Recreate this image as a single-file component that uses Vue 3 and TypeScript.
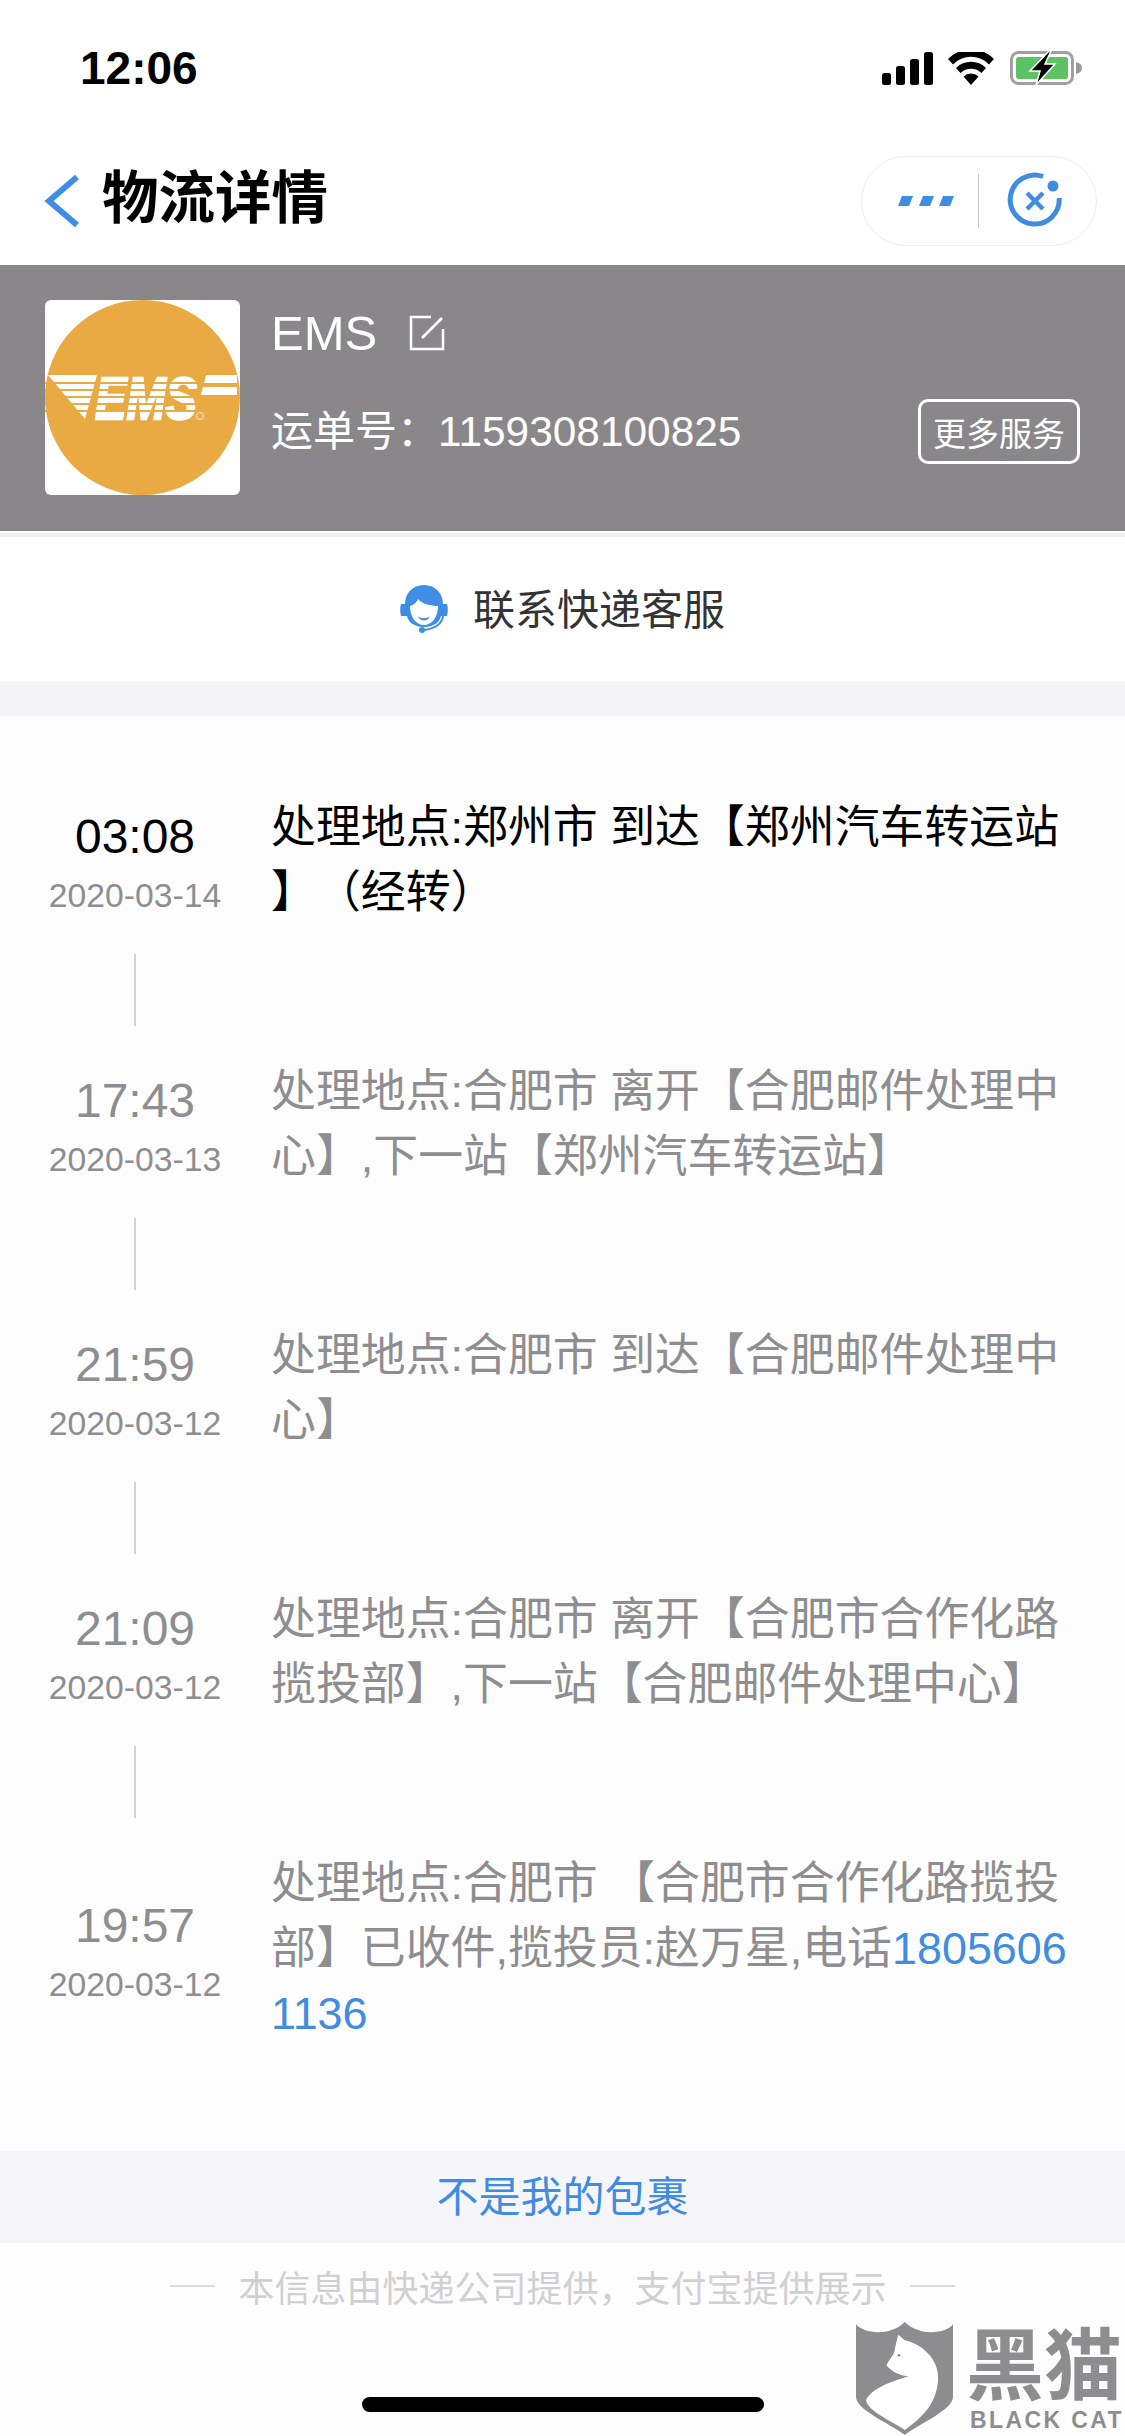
<script setup lang="ts">
interface Part { text: string; link?: boolean }
interface Step { time: string; date: string; active?: boolean; lines: Part[][] }

const steps: Step[] = [
  { time: '03:08', date: '2020-03-14', active: true, lines: [
    [{ text: '处理地点:郑州市 到达【郑州汽车转运站' }],
    [{ text: '】（经转）' }],
  ] },
  { time: '17:43', date: '2020-03-13', lines: [
    [{ text: '处理地点:合肥市 离开【合肥邮件处理中' }],
    [{ text: '心】,下一站【郑州汽车转运站】' }],
  ] },
  { time: '21:59', date: '2020-03-12', lines: [
    [{ text: '处理地点:合肥市 到达【合肥邮件处理中' }],
    [{ text: '心】' }],
  ] },
  { time: '21:09', date: '2020-03-12', lines: [
    [{ text: '处理地点:合肥市 离开【合肥市合作化路' }],
    [{ text: '揽投部】,下一站【合肥邮件处理中心】' }],
  ] },
  { time: '19:57', date: '2020-03-12', lines: [
    [{ text: '处理地点:合肥市 【合肥市合作化路揽投' }],
    [{ text: '部】已收件,揽投员:赵万星,电话' }, { text: '1805606', link: true }],
    [{ text: '1136', link: true }],
  ] },
]
const stripeY: number[] = [82, 89, 96, 103, 110]
</script>

<template>
  <div class="page">
    <div class="status">
      <span class="clock">12:06</span>
      <div class="status-icons">
        <svg width="51" height="33" viewBox="0 0 51 33">
          <rect x="0" y="21" width="9" height="12" rx="2.5" />
          <rect x="14" y="14" width="9" height="19" rx="2.5" />
          <rect x="28" y="7" width="9" height="26" rx="2.5" />
          <rect x="42" y="0" width="9" height="33" rx="2.5" />
        </svg>
        <svg class="wifi" width="46" height="33" viewBox="0 0 46 33">
          <path d="M23 33 L15.5 24.5 A11 11 0 0 1 30.5 24.5 Z" />
          <path d="M12.5 21 L8 16 A21 21 0 0 1 38 16 L33.5 21 A15 15 0 0 0 12.5 21 Z" />
          <path d="M5 12.5 L0 7 A32 32 0 0 1 46 7 L41 12.5 A25 25 0 0 0 5 12.5 Z" />
        </svg>
        <svg class="battery" width="72" height="34" viewBox="0 0 72 34">
          <rect x="1.5" y="1.5" width="61" height="31" rx="7" fill="none" stroke="#a0a0a0" stroke-width="3" />
          <rect x="6" y="6" width="52" height="22" rx="2.5" fill="#5cc264" />
          <path d="M66 11 C70 12 72 14 72 17 C72 20 70 22 66 23 Z" fill="#9a9a9a" />
          <path d="M39 0 L20 20 H30 L26 34 L45 13 H35 L41 0 Z" fill="#000" stroke="#fff" stroke-width="1.5" />
        </svg>
      </div>
    </div>

    <div class="nav">
      <svg class="back" width="36" height="52" viewBox="0 0 36 52">
        <path d="M33 2 L5 26 L33 50" fill="none" stroke="#3f8ee6" stroke-width="6" />
      </svg>
      <h1 class="title">物流详情</h1>
      <div class="capsule">
        <div class="capsule-more">
          <svg width="56" height="10" viewBox="0 0 56 10">
            <path d="M4 0 H15 L11 10 H0 Z M25 0 H36 L32 10 H21 Z M45 0 H56 L52 10 H41 Z" fill="#3f8ce0" />
          </svg>
        </div>
        <div class="capsule-close">
          <svg width="58" height="58" viewBox="0 0 58 58">
            <path d="M37 4.5 A24.5 24.5 0 1 0 53.2 26" fill="none" stroke="#3f8ce0" stroke-width="5" />
            <circle cx="47" cy="14" r="5.5" fill="#3f8ce0" />
            <path d="M21 21 L37 37 M37 21 L21 37" stroke="#3f8ce0" stroke-width="4.5" />
          </svg>
        </div>
      </div>
    </div>

    <div class="carrier">
      <div class="logo">
        <svg width="195" height="195" viewBox="0 0 195 195">
          <circle cx="97.5" cy="97.5" r="97.5" fill="#e9a943" />
          <path d="M3 75 H52 L40 119 Z" fill="#fff" />
          <path d="M161 75 H192 V83 H159 Z M158 87 H192 V95 H156 Z" fill="#fff" />
          <text x="50" y="119" class="ems-mark" textLength="102" lengthAdjust="spacingAndGlyphs">EMS</text>
          <rect v-for="y in stripeY" :key="y" x="0" :y="y" width="155" height="2" fill="#e9a943" />
          <circle cx="155" cy="116" r="3.5" fill="none" stroke="#fff" stroke-width="1" opacity="0.7" />
        </svg>
      </div>
      <div class="carrier-info">
        <div class="carrier-name">
          <span>EMS</span>
          <svg class="edit" width="36" height="36" viewBox="0 0 36 36">
            <path d="M22 2 H2 V34 H34 V14" fill="none" stroke="#fff" stroke-width="2.5" />
            <path d="M13 23 L33 3" fill="none" stroke="#fff" stroke-width="2.5" />
          </svg>
        </div>
        <div class="carrier-row">
          <div class="waybill"><span class="waybill-label">运单号：</span><span class="waybill-no">1159308100825</span></div>
          <div class="more-btn">更多服务</div>
        </div>
      </div>
    </div>
    <div class="carrier-edge"></div>

    <div class="contact">
      <svg width="48" height="48" viewBox="0 0 48 48">
        <path d="M24 0 C36 0 43 9 43 19 H47 C48 21 48 28 47 31 H41 C40 36 35 42 24 42 C13 42 8 36 7 31 H1 C0 28 0 21 1 19 H5 C5 9 12 0 24 0 Z" fill="#3f8ee6" />
        <path d="M10 20 C10 11 17 6 24 6 C31 6 38 11 38 20 C33 21 22 19 18 13 C17 17 14 20 10 20 Z" fill="#3f8ee6" />
        <path d="M10 21 C14 20 17 17 18 14 C22 19 32 21 38 21 C38 32 32 40 24 40 C16 40 10 32 10 21 Z" fill="#fff" />
        <path d="M18 31 C21 34 27 34 30 31 C28 37 20 37 18 31 Z" fill="#3f8ee6" />
        <path d="M43 30 C43 39 34 44 24 45" fill="none" stroke="#3f8ee6" stroke-width="2" />
        <circle cx="22" cy="45" r="3" fill="#3f8ee6" />
      </svg>
      <span class="contact-label">联系快递客服</span>
    </div>
    <div class="divider"></div>

    <div class="timeline">
      <template v-for="(step, i) in steps" :key="i">
        <div v-if="i > 0" class="connector"></div>
        <div class="step" :class="{ active: step.active }">
          <div class="when">
            <div class="time">{{ step.time }}</div>
            <div class="date">{{ step.date }}</div>
          </div>
          <div class="detail">
            <div v-for="(line, l) in step.lines" :key="l" class="line">
              <span v-for="(part, p) in line" :key="p" :class="{ link: part.link }">{{ part.text }}</span>
            </div>
          </div>
        </div>
      </template>
    </div>

    <div class="not-mine">不是我的包裹</div>
    <div class="note">
      <i class="dash"></i>
      <span>本信息由快递公司提供，支付宝提供展示</span>
      <i class="dash"></i>
    </div>

    <div class="home-bar"></div>

    <div class="watermark">
      <svg width="97" height="113" viewBox="48 65 292 340">
        <path d="M48 72 C70 100 150 110 195 65 C240 110 320 100 340 72 L340 290 C340 330 240 370 195 405 C150 370 48 330 48 290 Z" fill="#8d8d90" />
        <path d="M175 103 L195 120 C260 135 300 190 295 240 C290 310 250 350 195 390 C150 360 85 335 78 300 C95 265 150 245 207 228 C185 228 155 215 140 195 C148 175 165 165 165 145 Z" fill="#fff" />
        <circle cx="177" cy="165" r="4" fill="#8d8d90" />
      </svg>
      <div class="wm-text">
        <div class="wm-cn">黑猫</div>
        <div class="wm-en">BLACK CAT</div>
      </div>
    </div>
  </div>
</template>

<style scoped>
.page {
  position: relative;
  width: 1125px;
  height: 2436px;
  overflow: hidden;
  background: #fdfdfe;
  font-family: "Liberation Sans", "Noto Sans CJK SC", sans-serif;
  color: #000;
  text-spacing-trim: space-all;
}
.status {
  height: 136px;
  padding: 0 43px 0 80px;
  box-sizing: border-box;
  display: flex;
  align-items: center;
  justify-content: space-between;
  background: #fff;
}
.clock {
  font-size: 46px;
  font-weight: 700;
  line-height: 1;
}
.status-icons {
  display: flex;
  align-items: center;
  gap: 15px;
}
.wifi {
  margin-right: 1px;
}
.nav {
  height: 129px;
  padding: 0 28px 0 44px;
  box-sizing: border-box;
  display: flex;
  align-items: center;
  background: #fefefe;
}
.back {
  margin-right: 22px;
}
.title {
  margin: 0;
  flex: 1;
  font-size: 56.5px;
  font-weight: 700;
  height: 56px;
  line-height: 52px;
}
.capsule {
  width: 236px;
  height: 90px;
  box-sizing: border-box;
  display: flex;
  align-items: center;
  border: 1.5px solid #eeeef0;
  border-radius: 45px;
  background: #fefefe;
}
.capsule-more {
  width: 117px;
  height: 54px;
  box-sizing: border-box;
  padding-left: 36px;
  display: flex;
  align-items: center;
  border-right: 1.5px solid #c9c9cb;
}
.capsule-close {
  flex: 1;
  display: flex;
  align-items: center;
  justify-content: center;
  padding-right: 6px;
}
.carrier {
  height: 266px;
  padding: 35px 45px;
  box-sizing: border-box;
  display: flex;
  gap: 31px;
  background: #89878a;
  color: #fff;
}
.logo {
  width: 195px;
  height: 195px;
  flex: none;
  background: #fff;
  border-radius: 6px;
  overflow: hidden;
}
.logo svg {
  display: block;
}
.ems-mark {
  font-size: 60px;
  font-weight: 700;
  font-style: italic;
  fill: #fff;
  stroke: #fff;
  stroke-width: 2.4px;
}
.carrier-info {
  flex: 1;
}
.carrier-name {
  height: 66px;
  display: flex;
  align-items: center;
  gap: 32px;
  font-size: 49px;
}
.carrier-row {
  margin-top: 33px;
  display: flex;
  align-items: center;
  justify-content: space-between;
}
.waybill {
  display: flex;
  align-items: center;
  height: 65px;
  line-height: 58px;
}
.waybill-label {
  font-size: 42px;
}
.waybill-no {
  font-size: 42.4px;
  margin-left: -1px;
}
.more-btn {
  width: 162px;
  height: 65px;
  box-sizing: border-box;
  display: flex;
  align-items: center;
  justify-content: center;
  border: 3px solid #fff;
  border-radius: 10px;
  font-size: 33px;
  white-space: nowrap;
}
.carrier-edge {
  height: 4px;
  border-top: 2px solid #fff;
  background: #f0f0f4;
}
.contact {
  height: 144px;
  display: flex;
  align-items: center;
  justify-content: center;
  gap: 25px;
  background: #fff;
  font-size: 42px;
  color: #333;
}
.contact-label {
  margin-top: -5px;
}
.divider {
  height: 35px;
  background: #f5f5f8;
}
.timeline {
  padding: 76px 0 108px;
}
.connector {
  width: 2px;
  height: 72px;
  margin: 32px 0 30px 134px;
  background: #d2d2d4;
}
.step {
  display: flex;
  align-items: center;
  color: #8e8e90;
}
.step.active {
  color: #000;
}
.when {
  width: 271px;
  flex: none;
  padding-right: 1px;
  box-sizing: border-box;
  margin: 10px 0 -10px;
  text-align: center;
}
.time {
  font-size: 48px;
  line-height: 56px;
}
.date {
  font-size: 33.7px;
  line-height: 60px;
  color: #8e8e90;
}
.line {
  font-size: 44.9px;
  height: 65px;
  line-height: 72px;
  white-space: nowrap;
}
.link {
  color: #3f8ce0;
}
.not-mine {
  height: 92px;
  padding-bottom: 7px;
  box-sizing: border-box;
  display: flex;
  align-items: center;
  justify-content: center;
  background: #f6f6fa;
  font-size: 42px;
  color: #3f8ce0;
}
.note {
  margin-top: 18px;
  height: 50px;
  display: flex;
  align-items: center;
  justify-content: center;
  gap: 23px;
  font-size: 36px;
  color: #d0d0d3;
}
.dash {
  width: 45px;
  height: 2px;
  background: #dcdcde;
}
.home-bar {
  position: absolute;
  left: 362px;
  top: 2397px;
  width: 402px;
  height: 15px;
  border-radius: 8px;
  background: #000;
}
.watermark {
  position: absolute;
  left: 856px;
  top: 2322px;
  display: flex;
  gap: 13px;
  color: #8d8d90;
}
.watermark svg {
  display: block;
}
.wm-cn {
  font-size: 78px;
  font-weight: 700;
  line-height: 76px;
  margin-top: 7px;
}
.wm-en {
  font-size: 23px;
  font-weight: 700;
  line-height: 24px;
  letter-spacing: 2.4px;
  margin: 3px 0 0 4px;
  white-space: nowrap;
}
</style>

<style>
html, body {
  margin: 0;
  background: #fdfdfe;
}
</style>
